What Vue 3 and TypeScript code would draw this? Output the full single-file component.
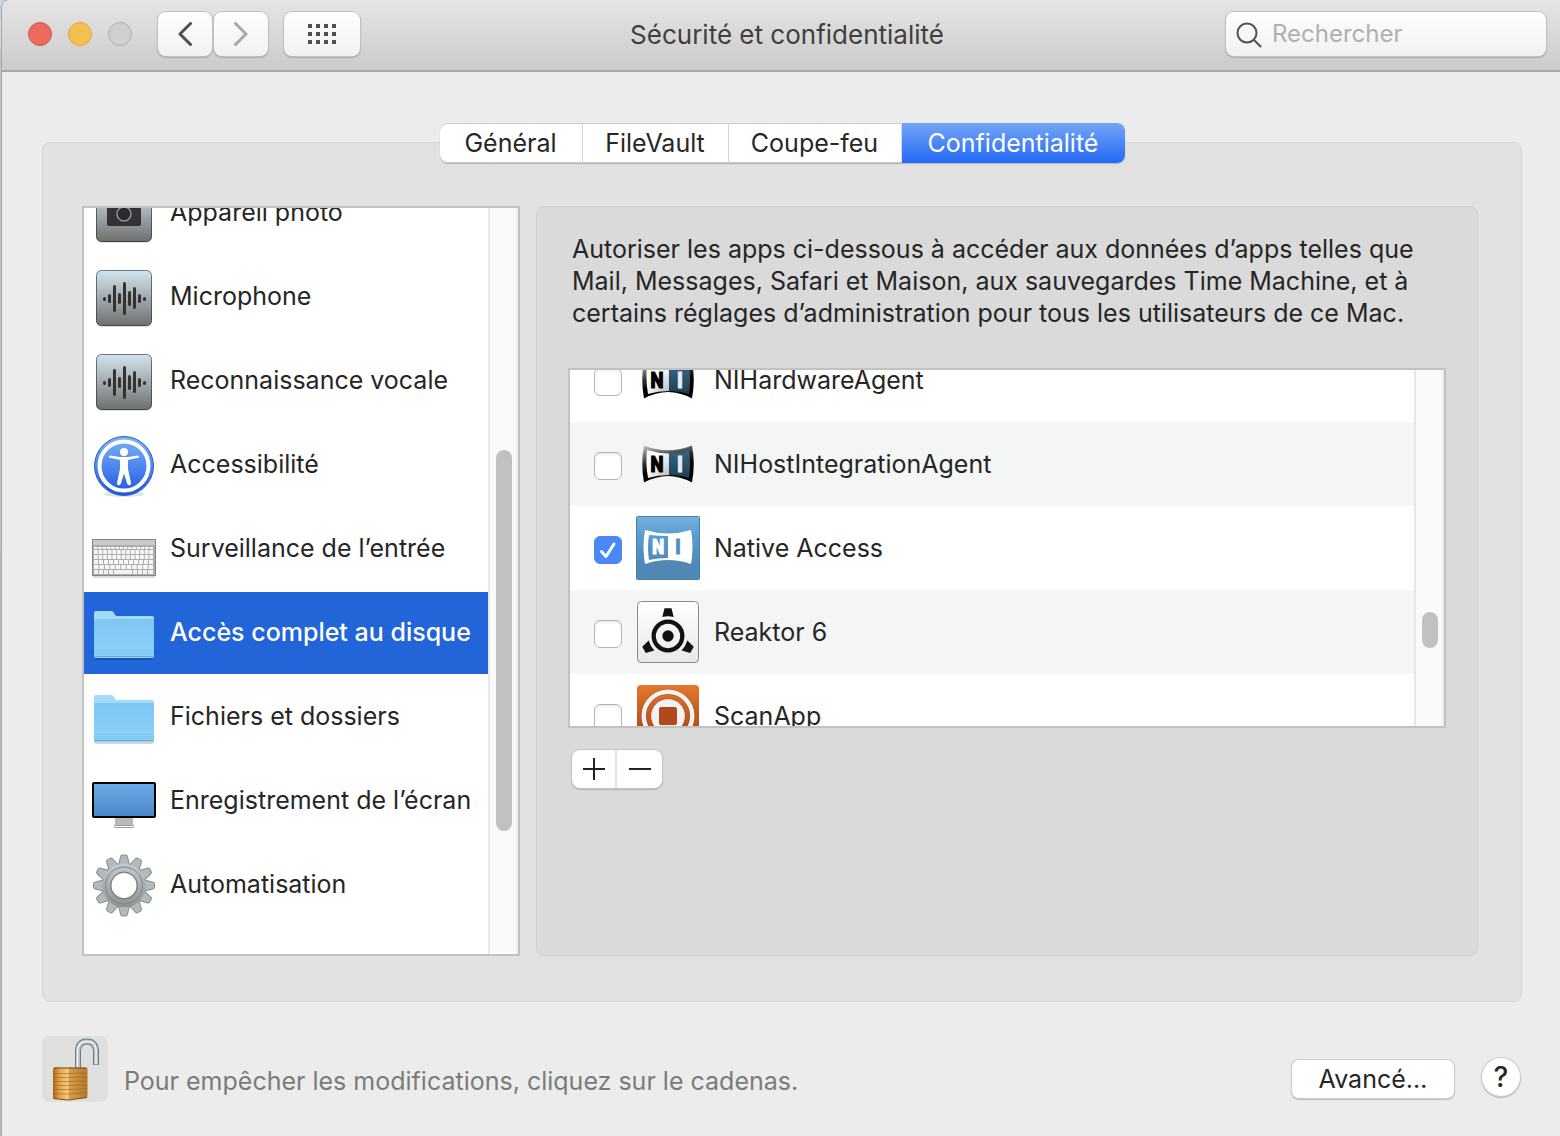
<script setup lang="ts">
import { ref } from 'vue'

type Category = { id: string; label: string; icon: string }
type AppEntry = { id: string; name: string; icon: string; allowed: boolean }

const tabs = ['Général', 'FileVault', 'Coupe-feu', 'Confidentialité']
const activeTab = ref('Confidentialité')

const categories: Category[] = [
  { id: 'camera', label: 'Appareil photo', icon: 'camera' },
  { id: 'mic', label: 'Microphone', icon: 'wave' },
  { id: 'speech', label: 'Reconnaissance vocale', icon: 'wave' },
  { id: 'a11y', label: 'Accessibilité', icon: 'a11y' },
  { id: 'input', label: 'Surveillance de l’entrée', icon: 'keyboard' },
  { id: 'disk', label: 'Accès complet au disque', icon: 'folder' },
  { id: 'files', label: 'Fichiers et dossiers', icon: 'folder' },
  { id: 'screen', label: 'Enregistrement de l’écran', icon: 'screen' },
  { id: 'automation', label: 'Automatisation', icon: 'gear' },
]
const selected = ref('disk')

const apps = ref<AppEntry[]>([
  { id: 'hw', name: 'NIHardwareAgent', icon: 'ni', allowed: false },
  { id: 'host', name: 'NIHostIntegrationAgent', icon: 'ni', allowed: false },
  { id: 'native', name: 'Native Access', icon: 'native', allowed: true },
  { id: 'reaktor', name: 'Reaktor 6', icon: 'reaktor', allowed: false },
  { id: 'scan', name: 'ScanApp', icon: 'scan', allowed: false },
])

// [x, top, height] of each bar in the sound wave
const bars = [
  [11, 31, 4], [16, 28, 9], [21, 19, 27], [26, 27, 11], [31, 16, 33],
  [36, 25, 15], [41, 21, 22], [46, 28, 9], [51, 31, 4],
]
const teeth = Array.from({ length: 12 }, (_, i) => i * 30)
const keyRows = [
  { y: 29, h: 2, n: 14 }, { y: 32, h: 4, n: 13 }, { y: 37, h: 4, n: 13 },
  { y: 42, h: 4, n: 12 }, { y: 47, h: 4, n: 11 },
]
const dots = Array.from({ length: 12 }, (_, i) => ({ x: (i % 4) * 8, y: Math.floor(i / 4) * 8 }))
</script>

<template>
  <div class="desktop">
    <svg class="defs" width="0" height="0" aria-hidden="true">
      <defs>
        <linearGradient id="steel" x1="0" y1="0" x2="0" y2="1"><stop offset="0" stop-color="#d3e4ec" /><stop offset=".5" stop-color="#a2abaf" /><stop offset="1" stop-color="#6f6f6f" /></linearGradient>
        <linearGradient id="steelEdge" x1="0" y1="0" x2="0" y2="1"><stop offset="0" stop-color="#637693" /><stop offset="1" stop-color="#444" /></linearGradient>
        <linearGradient id="blueDisc" x1="0" y1="0" x2="0" y2="1"><stop offset="0" stop-color="#7db1f3" /><stop offset=".55" stop-color="#4a83ec" /><stop offset="1" stop-color="#2152e0" /></linearGradient>
        <linearGradient id="folderFill" x1="0" y1="0" x2="0" y2="1"><stop offset="0" stop-color="#7dc7f3" /><stop offset="1" stop-color="#8dd2f9" /></linearGradient>
        <linearGradient id="screenFill" x1="0" y1="0" x2="0" y2="1"><stop offset="0" stop-color="#6cabea" /><stop offset="1" stop-color="#4886c8" /></linearGradient>
        <linearGradient id="gearFill" gradientUnits="userSpaceOnUse" x1="0" y1="-31" x2="0" y2="31"><stop offset="0" stop-color="#d0dade" /><stop offset=".5" stop-color="#a9adaf" /><stop offset="1" stop-color="#858585" /></linearGradient>
        <linearGradient id="niFrame" x1="0" y1="0" x2=".35" y2="1"><stop offset="0" stop-color="#c8c8c8" /><stop offset=".45" stop-color="#333" /><stop offset=".7" stop-color="#000" /></linearGradient>
        <linearGradient id="niWhite" x1="0" y1="0" x2="1" y2="1"><stop offset=".4" stop-color="#fff" /><stop offset="1" stop-color="#b8b8b8" /></linearGradient>
        <linearGradient id="niBlue" x1="0" y1="0" x2="0" y2="1"><stop offset="0" stop-color="#356682" /><stop offset="1" stop-color="#1d4053" /></linearGradient>
        <linearGradient id="nativeFill" x1="0" y1="0" x2="0" y2="1"><stop offset="0" stop-color="#76b1dc" /><stop offset=".3" stop-color="#5a9dce" /><stop offset=".75" stop-color="#4f88b5" /><stop offset="1" stop-color="#4f88b5" /></linearGradient>
        <linearGradient id="paper" x1="0" y1="0" x2="0" y2="1"><stop offset="0" stop-color="#fff" /><stop offset="1" stop-color="#e8e8e8" /></linearGradient>
        <linearGradient id="orange" x1="0" y1="0" x2="0" y2="1"><stop offset="0" stop-color="#e3782c" /><stop offset="1" stop-color="#a33c10" /></linearGradient>
        <linearGradient id="brassL" x1="0" y1="0" x2="1" y2="0"><stop offset="0" stop-color="#a9651d" /><stop offset=".4" stop-color="#e0a044" /><stop offset="1" stop-color="#f8cf86" /></linearGradient>
        <linearGradient id="brassR" x1="0" y1="0" x2="1" y2="0"><stop offset="0" stop-color="#dc9f47" /><stop offset="1" stop-color="#b37a2d" /></linearGradient>
      </defs>
    </svg>

    <div class="window">
      <header class="titlebar">
        <div class="lead">
          <div class="lights">
            <button class="light red" aria-label="Fermer"></button>
            <button class="light amber" aria-label="Réduire"></button>
            <button class="light off" aria-label="Agrandir" disabled></button>
          </div>
          <div class="nav">
            <button class="tool" aria-label="Précédent">
              <svg width="16" height="24" viewBox="0 0 16 24"><path d="M13.500 1.500 3 12l10.500 10.500" fill="none" stroke="#505050" stroke-width="3" stroke-linecap="round" stroke-linejoin="round" /></svg>
            </button>
            <button class="tool" aria-label="Suivant">
              <svg width="16" height="24" viewBox="0 0 16 24"><path d="M2.500 1.500 13 12 2.500 22.500" fill="none" stroke="#a8a8a8" stroke-width="3" stroke-linecap="round" stroke-linejoin="round" /></svg>
            </button>
          </div>
          <button class="tool wide" aria-label="Tout afficher">
            <svg width="28" height="20" viewBox="0 0 28 20"><rect v-for="(d, i) in dots" :key="i" :x="d.x" :y="d.y" width="4" height="4" fill="#505050" /></svg>
          </button>
        </div>
        <h1>Sécurité et confidentialité</h1>
        <label class="search">
          <svg width="26" height="26" viewBox="0 0 26 26"><g fill="none" stroke="#505050" stroke-width="2"><circle cx="11" cy="11" r="9.500" /><path d="m18 18 7 7" /></g></svg>
          <input type="search" placeholder="Rechercher" aria-label="Rechercher" />
        </label>
      </header>

      <main>
        <section class="pane">
          <nav class="tabs">
            <button v-for="t in tabs" :key="t" :class="{ active: t === activeTab }" @click="activeTab = t">{{ t }}</button>
          </nav>

          <div class="columns">
            <div class="scrollbox sidebar">
              <ul class="items">
                <li v-for="c in categories" :key="c.id">
                  <button class="category" :class="{ selected: c.id === selected }" @click="selected = c.id">
                    <svg width="64" height="64" viewBox="0 0 64 64">
                      <template v-if="c.icon === 'camera' || c.icon === 'wave'">
                        <rect x="4" y="5" width="56" height="56" rx="5" fill="#000" opacity=".12" />
                        <rect x="4.500" y="4.500" width="55" height="55" rx="5" fill="url(#steel)" stroke="url(#steelEdge)" />
                      </template>
                      <template v-if="c.icon === 'camera'">
                        <rect x="15" y="20" width="34" height="24" rx="2" fill="#333" />
                        <circle cx="32" cy="32" r="7" fill="#2b2b2b" stroke="#87979d" stroke-width="1.500" />
                      </template>
                      <template v-else-if="c.icon === 'wave'">
                        <rect v-for="b in bars" :key="b[0]" :x="b[0]" :y="b[1]" :height="b[2]" width="3" rx="1.500" fill="#333" />
                      </template>
                      <template v-else-if="c.icon === 'a11y'">
                        <ellipse cx="32" cy="60" rx="20" ry="3" fill="#000" opacity=".12" />
                        <circle cx="32" cy="32" r="29.500" fill="url(#blueDisc)" stroke="#2b62c8" />
                        <circle cx="32" cy="32" r="24.500" fill="none" stroke="#fff" stroke-width="4" />
                        <circle cx="32" cy="18" r="4" fill="#fff" />
                        <path d="M17 23.500 28 26v9L25 49q-.3 2 1.300 2.300 1.700.2 2.400-1.300L32 39.500 35.300 50q.7 1.500 2.400 1.300 1.600-.3 1.300-2.300L36 35v-9l11-2.500q.8-2-1-2L36 23h-8l-10-1.500q-1.800 0-1 2z" fill="#fff" />
                      </template>
                      <template v-else-if="c.icon === 'keyboard'">
                        <rect x="1" y="57" width="62" height="3" fill="#000" opacity=".14" />
                        <rect x=".5" y="21.500" width="63" height="36" fill="#adadad" stroke="#858585" />
                        <rect x="1" y="22" width="62" height="5" fill="#cacaca" />
                        <g v-for="r in keyRows" :key="r.y">
                          <rect v-for="k in r.n" :key="k" :x="2 + ((k - 1) * 60) / r.n" :y="r.y" :width="60 / r.n - 1" :height="r.h" fill="#f8f8f8" />
                        </g>
                        <path d="M2 52h4v4H2zm5 0h4v4H7zm5 0h4v4h-4zm5 0h4v4h-4zm5 0h18v4H22zm19 0h4v4h-4zm5 0h4v4h-4zm5 0h4v4h-4zm5 0h5v4h-5z" fill="#f2f2f2" />
                      </template>
                      <template v-else-if="c.icon === 'folder'">
                        <path d="M2 55h60v1q0 2-2 2H4q-2 0-2-2z" fill="#000" opacity=".16" />
                        <path d="M2 11q0-2 2-2h15q2 0 3 2l2 3h36q2 0 2 2v38q0 2-2 2H4q-2 0-2-2z" fill="#a2dbf9" />
                        <path d="M2 18q0-1 1-1h58q1 0 1 1v36q0 2-2 2H4q-2 0-2-2z" fill="url(#folderFill)" />
                        <path d="M2 48.500h60M2 50.500h60M2 52.500h60" stroke="#72b8e0" opacity=".5" />
                        <path d="M2.500 54.500h59" stroke="#5faad6" />
                      </template>
                      <template v-else-if="c.icon === 'screen'">
                        <path d="M23 48h18v8H23z" fill="#b9b9b9" />
                        <path d="M22 55.500h20M22 57.500h20" stroke="#9d9d9d" />
                        <rect x="1" y="13" width="62" height="34" rx="1" fill="url(#screenFill)" stroke="#000" stroke-width="2" />
                      </template>
                      <g v-else transform="translate(32 31.500)">
                        <g stroke="#858c90" stroke-width="2" fill="#858c90">
                          <path v-for="a in teeth" :key="a" :transform="`rotate(${a})`" d="M-5-20-3-28.500q.2-1.500 1.500-1.500h3q1.300 0 1.500 1.500L5-20z" />
                          <circle r="17.500" fill="none" stroke-width="10" />
                        </g>
                        <g fill="#b4babc">
                          <path v-for="a in teeth" :key="a" :transform="`rotate(${a})`" d="M-5-20-3-28.500q.2-1.500 1.500-1.500h3q1.300 0 1.500 1.500L5-20z" />
                        </g>
                        <circle r="17.500" fill="none" stroke="url(#gearFill)" stroke-width="8.500" />
                        <circle r="18.500" fill="none" stroke="#7d8386" />
                        <circle r="13.500" fill="none" stroke="#777c7f" />
                      </g>
                    </svg>
                    <span>{{ c.label }}</span>
                  </button>
                </li>
              </ul>
              <div class="track"><div class="thumb long"></div></div>
            </div>

            <div class="detail">
              <p>Autoriser les apps ci-dessous à accéder aux données d’apps telles que Mail, Messages, Safari et Maison, aux sauvegardes Time Machine, et à certains réglages d’administration pour tous les utilisateurs de ce Mac.</p>
              <div class="scrollbox applist">
                <ul class="items">
                  <li v-for="a in apps" :key="a.id">
                    <label class="app">
                      <input v-model="a.allowed" type="checkbox" />
                      <svg width="64" height="64" viewBox="0 0 64 64">
                        <template v-if="a.icon === 'ni'">
                          <path d="M8 13.500q24 9.500 48 0 3.500 18.500 0 37-24-13-48 0-3.500-18.500 0-37z" fill="url(#niFrame)" />
                          <path d="M11 18q11 3.500 22 3.500V43q-11 0-21 3-2.500-14-1-28z" fill="url(#niWhite)" />
                          <path d="M33 21.500q11 0 20-3.500 2 14 0 28-9-3-20-3z" fill="url(#niBlue)" />
                          <text x="21" y="40" class="ni-letter" fill="#000" stroke="#000">N</text>
                          <text x="44" y="40" class="ni-letter" fill="#e8eef0" stroke="#e8eef0">I</text>
                        </template>
                        <template v-else-if="a.icon === 'native'">
                          <rect x=".5" y=".5" width="63" height="63" rx="1" fill="url(#nativeFill)" stroke="#4681ae" />
                          <path d="M9 14q23 7 46 0 3 17 0 34-23-8-46 0-3-17 0-34zm4 5q-2 12 0 25 9-2 19-2V20q-10 0-19-1z" fill="#fff" fill-rule="evenodd" />
                          <text x="22" y="38" class="ni-letter small" fill="#fff" stroke="#fff">N</text>
                          <text x="42" y="38" class="ni-letter small" fill="#4f8fc0" stroke="#4f8fc0">I</text>
                        </template>
                        <template v-else-if="a.icon === 'reaktor'">
                          <rect x="1.500" y="1.500" width="61" height="61" rx="4" fill="url(#paper)" stroke="#8a8a8a" />
                          <circle cx="32" cy="36" r="14.300" fill="none" stroke="#111" stroke-width="4.300" />
                          <circle cx="32" cy="36" r="5.700" fill="#111" />
                          <path v-for="r in [0, 120, 240]" :key="r" :transform="`rotate(${r} 32 36)`" d="M28.500 8.300h7l2.200 8.700q-5.700-1.500-11.400 0z" fill="#111" />
                        </template>
                        <template v-else>
                          <rect x="1" y="1" width="62" height="62" rx="4" fill="url(#orange)" />
                          <circle cx="32" cy="32" r="24.300" fill="none" stroke="#8c3a14" stroke-width="6" opacity=".4" />
                          <circle cx="32" cy="32" r="24.300" fill="none" stroke="#f3f1f1" stroke-width="4.500" />
                          <circle cx="32" cy="32" r="17.300" fill="#f3f1f3" stroke="#a04015" stroke-width=".7" />
                          <rect x="23" y="23" width="18" height="18" rx="2" fill="#b04a1c" />
                        </template>
                      </svg>
                      <span>{{ a.name }}</span>
                    </label>
                  </li>
                </ul>
                <div class="track"><div class="thumb short"></div></div>
              </div>
              <div class="plusminus">
                <button aria-label="Ajouter"><svg width="22" height="22" viewBox="0 0 22 22"><path d="M0 11h22M11 0v22" stroke="#222" stroke-width="2" /></svg></button>
                <button aria-label="Supprimer"><svg width="22" height="22" viewBox="0 0 22 22"><path d="M0 11h22" stroke="#222" stroke-width="2" /></svg></button>
              </div>
            </div>
          </div>
        </section>

        <footer>
          <button class="lock" aria-label="Cadenas">
            <svg width="66" height="66" viewBox="0 0 66 66">
              <path d="M36 33V16q0-10.500 9-10.500T54 16v13" fill="none" stroke="#6c7b81" stroke-width="6" />
              <path d="M36 33V16q0-10.500 9-10.500T54 16v12.500" fill="none" stroke="#b3c0c6" stroke-width="4" />
              <path d="M35.500 33V16q0-10.500 9.500-10.500T54 16v12" fill="none" stroke="#edf2f4" stroke-width="1.500" />
              <path d="M11 33q0-1.500 2-1.500h13.500V64L12 62.800q-1-.2-1-1.300z" fill="url(#brassL)" />
              <path d="M26.500 31.500H44q1.500 0 1.500 1.500v27.500q0 1-1 1.200L26.500 64z" fill="url(#brassR)" />
              <path d="M11 37.500h15.500L45 37M11 41.500h15.500L45 41M11 45.500h15.500L45 45M11 49.500h15.500L45 49M11 53.500h15.500L45 52.500M11 57.500l15.500.5L45 56.500" fill="none" stroke="#9a6019" opacity=".55" />
              <path d="M12 32h32M11.500 62.500 26.500 64l18.500-2.500" fill="none" stroke="#7c471a" />
            </svg>
          </button>
          <p>Pour empêcher les modifications, cliquez sur le cadenas.</p>
          <button class="advanced">Avancé…</button>
          <button class="help" aria-label="Aide">?</button>
        </footer>
      </main>
    </div>
  </div>
</template>

<style>
body {
  background: #ececec;
}
</style>

<style scoped>
* {
  box-sizing: border-box;
}
.desktop {
  min-height: 100vh;
  padding-left: 2px;
  display: flex;
  background: linear-gradient(#c9d6e6 0 20px, #d8d8d8 20px 48px, #c4c4c4 48px 550px, #bdbdbd 550px);
  font-family: Inter, "Liberation Sans", sans-serif;
  font-size: 25px;
  line-height: 32px;
  color: #262626;
}
.defs {
  position: absolute;
}
.window {
  flex: 1;
  min-width: 0;
  background: #ececec;
  box-shadow: 0 0 0 1px #a6a6a6;
  border-top-left-radius: 8px;
  overflow: hidden;
}
button,
input {
  font: inherit;
  color: inherit;
  margin: 0;
  padding: 0;
  border: 0;
  background: none;
}
svg {
  display: block;
  flex: none;
}
ul,
p,
h1 {
  margin: 0;
  padding: 0;
  list-style: none;
}

.titlebar {
  display: grid;
  grid-template-columns: 1fr auto 1fr;
  align-items: center;
  height: 72px;
  padding: 0 14px 2px 26px;
  background: linear-gradient(#e5e5e5, #cbcbcb);
  border-bottom: 2px solid #a9a9a9;
}
.lead,
.lights,
.nav {
  display: flex;
  align-items: center;
}
.lights {
  gap: 16px;
  margin-right: 26px;
}
.light {
  width: 24px;
  height: 24px;
  border-radius: 50%;
  border: 1px solid;
}
.red {
  background: #ed6a5f;
  border-color: #d9554b;
}
.amber {
  background: #f6c04f;
  border-color: #dba540;
}
.off {
  background: #cfcfcf;
  border-color: #adadad;
}
.nav {
  gap: 2px;
  margin-right: 16px;
}
.tool,
.search {
  height: 44px;
  border-radius: 8px;
  background: linear-gradient(#fefefe, #f1f1f1);
  box-shadow: 0 0 0 1px #c2c2c2, 0 1px 1px 1px #a9a9a9;
}
.tool {
  width: 54px;
  display: flex;
  align-items: center;
  justify-content: center;
}
.wide {
  width: 76px;
}
h1 {
  font-size: 26px;
  font-weight: 400;
  color: #404040;
  padding-top: 2px;
}
.search {
  justify-self: end;
  width: 320px;
  display: flex;
  align-items: center;
  padding: 2px 10px 0;
  gap: 10px;
}
.search input {
  flex: 1;
  min-width: 0;
  outline: 0;
  appearance: none;
  padding-bottom: 2px;
  font-size: 24px;
}
.search input::placeholder {
  color: #b0b0b0;
  opacity: 1;
}

main {
  padding: 70px 38px 34px 40px;
}
.pane {
  background: #e2e2e2;
  border: 1px solid #d6d6d6;
  border-radius: 8px;
  padding: 0 43px 45px 39px;
}
.tabs {
  display: grid;
  grid-template-columns: 143px 146px 173px 223px;
  justify-content: center;
  margin: -20px -4px 43px 0;
}
.tabs button {
  height: 40px;
  background: #fff;
  border-right: 1px solid #dcdcdc;
  box-shadow: 0 1px 1px #b4b4b4, 0 -1px 0 #cacaca inset, 0 1px 0 #cacaca inset;
}
.tabs button:first-child {
  border-radius: 8px 0 0 8px;
}
.tabs button:last-child {
  border-radius: 0 8px 8px 0;
}
.tabs button.active {
  background: linear-gradient(#74a5f7, #2369f6);
  box-shadow: 0 1px 1px #b4b4b4;
  border: 0;
  color: #fff;
}
.columns {
  display: flex;
  gap: 16px;
}
.scrollbox {
  display: flex;
  border: 2px solid #c2c2c2;
  background: #fff;
  overflow: hidden;
}
.items {
  flex: 1;
  min-width: 0;
}
.track {
  width: 30px;
  background: #fafafa;
  border-left: 2px solid #e8e8e8;
  border-right: 2px solid #efefef;
  padding-left: 6px;
}
.thumb {
  width: 16px;
  margin-top: 242px;
  border-radius: 8px;
  background: #c1c1c1;
}
.long {
  height: 381px;
}
.short {
  height: 36px;
}
.sidebar {
  width: 438px;
  height: 750px;
  flex: none;
}
.sidebar .items {
  margin-top: -36px;
}
.category {
  width: 100%;
  height: 82px;
  margin-bottom: 2px;
  padding: 10px 0 0 8px;
  display: flex;
  gap: 14px;
  text-align: left;
  white-space: nowrap;
}
.category span {
  padding-top: 14px;
}
.app span {
  padding-top: 16px;
}
.selected {
  background: #2265d9;
  color: #fff;
  font-weight: 500;
}
.detail {
  flex: 1;
  min-width: 0;
  background: #dadada;
  border: 1px solid #cfcfcf;
  border-radius: 8px;
  padding: 26px 31px;
}
.detail p {
  padding: 0 4px;
}
.applist {
  height: 360px;
  margin-top: 39px;
}
.applist .items {
  margin-top: -32px;
}
.app {
  display: flex;
  height: 84px;
  padding: 10px 0 0 24px;
  gap: 14px;
}
li:nth-child(even) .app {
  background: #f4f5f5;
}
.app input {
  appearance: none;
  width: 28px;
  height: 28px;
  margin-top: 20px;
  border: 1px solid #b5b5b5;
  border-radius: 6px;
  background: #fff;
  box-shadow: 0 2px 2px #ececec inset;
}
.app input:checked {
  border-color: #4a89f5;
  box-shadow: none;
  background: #4a89f5 url("data:image/svg+xml,%3Csvg xmlns='http://www.w3.org/2000/svg' viewBox='0 0 26 26'%3E%3Cpath d='M6.500 14.500l4.500 5 8-12.500' fill='none' stroke='white' stroke-width='3' stroke-linecap='round' stroke-linejoin='round'/%3E%3C/svg%3E") center / 26px;
}
.ni-letter {
  font: 700 22px "Liberation Sans Narrow", "Roboto Condensed", "Open Sans Condensed", Roboto, sans-serif;
  text-anchor: middle;
  stroke-width: 1px;
}
.small {
  font-size: 20px;
}
.plusminus {
  display: inline-flex;
  margin: 22px 0 0 4px;
  border-radius: 8px;
  background: #fff;
  box-shadow: 0 0 0 1px #c4c4c4, 0 1px 1px 1px #b4b4b4;
}
.plusminus button {
  width: 45px;
  height: 38px;
  display: flex;
  align-items: center;
  justify-content: center;
}
.plusminus button:first-child {
  border-right: 2px solid #e2e2e2;
}

footer {
  display: flex;
  align-items: center;
  margin-top: 34px;
}
.lock {
  border-radius: 8px;
  background: #dfdfdf;
}
footer p {
  flex: 1;
  padding: 24px 16px 0;
  align-self: flex-start;
  line-height: 42px;
  color: #7b7b7b;
}
.advanced,
.help {
  background: #fff;
  box-shadow: 0 0 0 1px #cdcdcd, 0 1px 1px 1px #bcbcbc;
  height: 38px;
}
.advanced {
  width: 162px;
  margin-top: 20px;
  border-radius: 7px;
}
.help {
  width: 38px;
  margin: 16px 2px 0 28px;
  border-radius: 50%;
  font-size: 28px;
  font-weight: 500;
}
</style>
